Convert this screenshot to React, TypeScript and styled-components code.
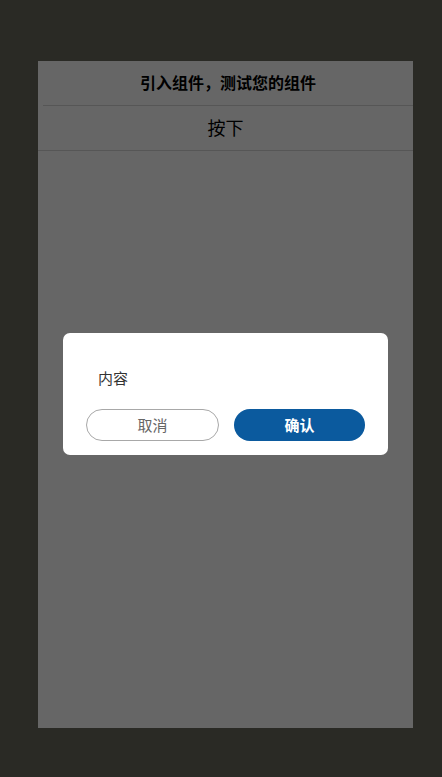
import React from "react";
import styled, { createGlobalStyle } from "styled-components";

const Global = createGlobalStyle`
  html, body { margin: 0; padding: 0; background: #2a2a25; }
  body { font-family: "Noto Sans CJK SC", "Noto Sans", sans-serif; }
`;

const Page = styled.div`
  width: 442px;
  height: 777px;
  box-sizing: border-box;
  padding: 61px 0 0 38px;
  background: #2a2a25;
`;

const Phone = styled.div`
  position: relative;
  width: 375px;
  height: 667px;
  background: #ffffff;
  overflow: hidden;
  display: flex;
  flex-direction: column;
`;

const Header = styled.div`
  height: 41px;
  padding-bottom: 3px;
  display: flex;
  align-items: center;
  justify-content: center;
  font-size: 16px;
  font-weight: 700;
  color: #000;
  border-bottom: 1px solid #d8d8d8;
  margin: 0 0 0 5px;
`;

const PressRow = styled.button`
  height: 45px;
  border: none;
  border-bottom: 1px solid #d8d8d8;
  background: transparent;
  font-family: inherit;
  font-size: 18px;
  color: #000;
  display: flex;
  align-items: center;
  justify-content: center;
  padding: 0 0 2px;
`;

const Mask = styled.div`
  position: absolute;
  inset: 0;
  background: rgba(0, 0, 0, 0.6);
  display: flex;
  align-items: center;
  justify-content: center;
  padding-bottom: 1px;
`;

const Dialog = styled.div`
  width: 325px;
  box-sizing: border-box;
  background: #fff;
  border-radius: 7px;
  padding: 0 23px 14px;
  display: flex;
  flex-direction: column;
`;

const Content = styled.div`
  padding: 35px 12px 0;
  height: 20px;
  line-height: 20px;
  font-size: 15px;
  color: #333;
  margin-bottom: 21px;
  box-sizing: content-box;
`;

const Actions = styled.div`
  display: flex;
  gap: 15px;
`;

const Btn = styled.button<{ $primary?: boolean }>`
  flex: 1;
  height: 32px;
  border-radius: 16px;
  font-family: inherit;
  font-size: 15px;
  box-sizing: border-box;
  padding: 0 0 1px;
  border: ${(p) => (p.$primary ? "none" : "1px solid #a8a8a8")};
  background: ${(p) => (p.$primary ? "#0b5a9e" : "#fff")};
  color: ${(p) => (p.$primary ? "#fff" : "#666")};
  font-weight: ${(p) => (p.$primary ? 700 : 400)};
`;

export default function App() {
  return (
    <>
      <Global />
      <Page>
        <Phone>
          <Header>引入组件，测试您的组件</Header>
          <PressRow>按下</PressRow>
          <Mask>
            <Dialog>
              <Content>内容</Content>
              <Actions>
                <Btn>取消</Btn>
                <Btn $primary>确认</Btn>
              </Actions>
            </Dialog>
          </Mask>
        </Phone>
      </Page>
    </>
  );
}
